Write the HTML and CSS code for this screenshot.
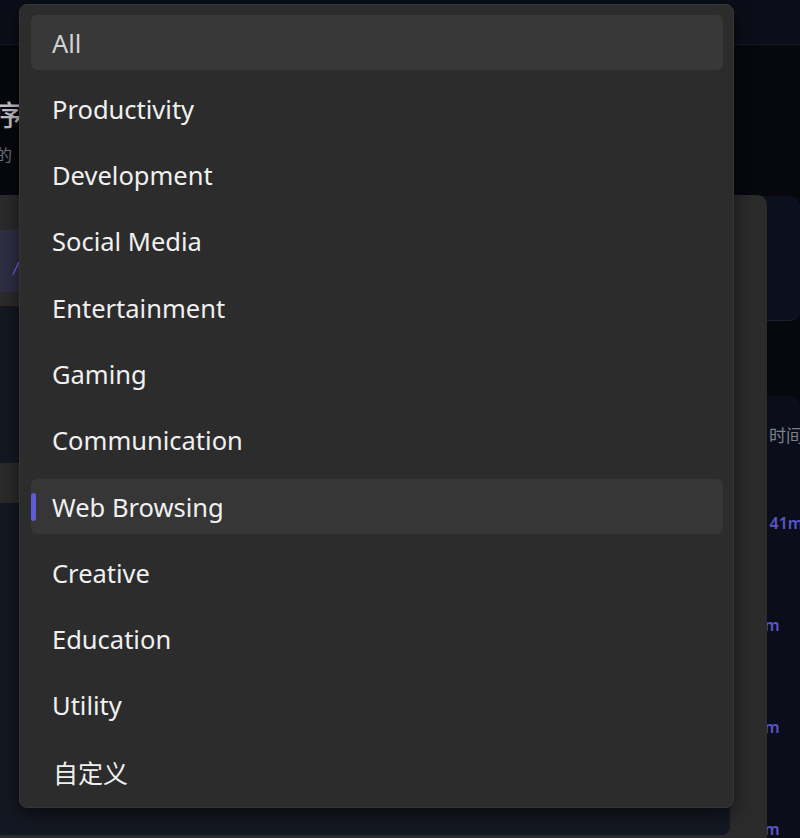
FILE: index.html
```html
<!DOCTYPE html>
<html lang="zh-CN">
<head>
<meta charset="utf-8">
<title>应用程序</title>
<link rel="stylesheet" href="styles.css">
</head>
<body>
<div class="page">
  <header class="topbar"></header>
  <section class="intro">
    <h1 class="title">应用程序</h1>
    <p class="subtitle">所有已安装的<span class="sub-rest">应用及使用时长</span></p>
  </section>
  <section class="filter-card"></section>
  <section class="table-card">
    <div class="table-head"><span class="col-head">时间</span></div>
    <div class="table-row"><span class="value">1h 41m</span></div>
    <div class="table-row"><span class="value">25m</span></div>
    <div class="table-row"><span class="value">18m</span></div>
    <div class="table-row"><span class="value">12m</span></div>
  </section>
</div>

<div class="dialog">
  <div class="tab">
    <svg class="tab-icon" width="10" height="16" viewBox="0 0 10 16"><path d="M8.5 1.5 L3 13 L1.5 14.5 L1.8 12.4 L7 1 Z" fill="#6a62e6"/></svg>
  </div>
  <div class="dark-card card-top"></div>
  <div class="dark-card card-bottom"></div>
</div>

<ul class="menu">
  <li class="item item-all">All</li>
  <li class="item">Productivity</li>
  <li class="item">Development</li>
  <li class="item">Social Media</li>
  <li class="item">Entertainment</li>
  <li class="item">Gaming</li>
  <li class="item">Communication</li>
  <li class="item item-selected">Web Browsing</li>
  <li class="item">Creative</li>
  <li class="item">Education</li>
  <li class="item">Utility</li>
  <li class="item item-cjk">自定义</li>
</ul>
</body>
</html>
```

FILE: styles.css
```css
* { box-sizing: border-box; }
html, body {
  margin: 0;
  padding: 0;
  width: 800px;
  height: 838px;
  overflow: hidden;
  background: #07080e;
  font-family: "Noto Sans", "Noto Sans CJK SC", sans-serif;
}
.page {
  position: relative;
  width: 800px;
}
.topbar {
  height: 45px;
  background: #0b0e18;
  border-bottom: 1px solid #151a28;
}
.intro {
  padding: 51px 0 30px 0;
  margin-left: -90px;
}
.title {
  margin: 0;
  font-family: "Noto Sans CJK SC", sans-serif;
  font-size: 28px;
  line-height: 36px;
  font-weight: 500;
  color: #c4c4c8;
}
.subtitle {
  margin: 10px 0 0 6px;
  font-family: "Noto Sans CJK SC", sans-serif;
  font-size: 16px;
  line-height: 24px;
  color: #6f707a;
  white-space: nowrap;
}
.sub-rest { margin-left: 14px; }
.filter-card {
  height: 125px;
  background: #0c101e;
  border-radius: 10px;
  border-bottom: 1px solid #1a1f30;
}
.table-card {
  margin-top: 75px;
  background: #0b0e1a;
  border-radius: 10px;
  padding-left: 746px;
}
.table-head {
  height: 76px;
  display: flex;
  align-items: center;
  font-family: "Noto Sans CJK SC", sans-serif;
  font-size: 17px;
  color: #7e808b;
}
.col-head { margin-left: 23px; white-space: nowrap; }
.table-row {
  height: 102px;
  display: flex;
  align-items: center;
}
.value {
  white-space: nowrap;
  font-size: 16px;
  font-weight: 600;
  color: #5a54c9;
}

.dialog {
  position: absolute;
  left: -40px;
  top: 195px;
  width: 807px;
  height: 700px;
  background: #2b2b2b;
  border-radius: 10px;
  padding: 35px 37px 0 30px;
  display: flex;
  flex-direction: column;
}
.tab {
  height: 62px;
  background: #302e44;
  border-radius: 6px;
  padding: 31px 0 0 21px;
}
.tab-icon { display: block; }
.dark-card {
  background: #141822;
  border-radius: 8px;
}
.card-top {
  margin-top: 14px;
  height: 157px;
}
.card-bottom {
  margin-top: 40px;
  height: 332px;
}

.menu {
  position: absolute;
  left: 19px;
  top: 4px;
  width: 715px;
  height: 804px;
  margin: 0;
  list-style: none;
  background: #2c2c2c;
  border: 1px solid #353535;
  border-radius: 8px;
  box-shadow: 0 6px 20px rgba(0, 0, 0, 0.55);
  padding: 10px 10px 7px 11px;
  display: flex;
  flex-direction: column;
  gap: 11.3px;
}
.item {
  position: relative;
  height: 55px;
  flex: none;
  display: flex;
  align-items: center;
  padding-left: 21px;
  border-radius: 6px;
  font-size: 25.5px;
  line-height: 30px;
  color: #f0f0f0;
}
.item-all {
  background: #383838;
  color: #d2d2d2;
}
.item-selected {
  background: #363636;
}
.item-selected::before {
  content: "";
  position: absolute;
  left: 0;
  top: 14px;
  width: 5px;
  height: 28px;
  border-radius: 3px;
  background: #5f5ad8;
}
.item-cjk {
  font-family: "Noto Sans CJK SC", sans-serif;
  font-size: 25px;
  padding-left: 22px;
}
```
